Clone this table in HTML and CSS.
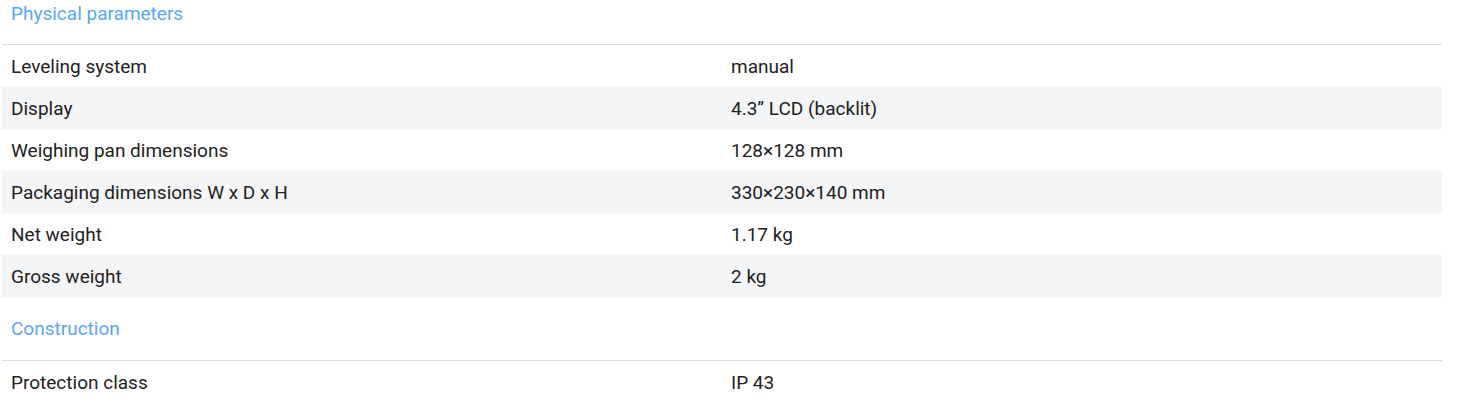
FILE: index.html
```html
<!DOCTYPE html>
<html lang="en">
<head>
<meta charset="utf-8">
<link rel="stylesheet" href="styles.css">
</head>
<body>
<div class="specs">
  <section class="group first">
    <h3 class="group-title">Physical parameters</h3>
    <div class="rows">
      <div class="row"><div class="cell">Leveling system</div><div class="cell">manual</div></div>
      <div class="row alt"><div class="cell">Display</div><div class="cell">4.3” LCD (backlit)</div></div>
      <div class="row"><div class="cell">Weighing pan dimensions</div><div class="cell">128×128 mm</div></div>
      <div class="row alt"><div class="cell">Packaging dimensions W x D x H</div><div class="cell">330×230×140 mm</div></div>
      <div class="row"><div class="cell">Net weight</div><div class="cell">1.17 kg</div></div>
      <div class="row alt"><div class="cell">Gross weight</div><div class="cell">2 kg</div></div>
    </div>
  </section>
  <section class="group">
    <h3 class="group-title">Construction</h3>
    <div class="rows">
      <div class="row"><div class="cell">Protection class</div><div class="cell">IP 43</div></div>
    </div>
  </section>
</div>
</body>
</html>
```
FILE: styles.css
```css
html, body {
  margin: 0;
  padding: 0;
  background: #ffffff;
}
body {
  font-family: Roboto, "Liberation Sans", Arial, sans-serif;
  color: #222222;
  overflow: hidden;
}
.specs {
  width: 1440px;
  margin-left: 2px;
}
.group-title {
  margin: 0;
  font-weight: 400;
  font-size: 19px;
  line-height: 24px;
  color: #5aa6f7;
  padding: 20px 9px 19px;
  border-bottom: 1px solid #dddddd;
}
.group.first .group-title {
  padding-top: 2px;
  padding-bottom: 18px;
}
.row {
  display: grid;
  grid-template-columns: 1fr 1fr;
  height: 42px;
  align-items: center;
  font-size: 19px;
  line-height: 24px;
}
.row.alt {
  background: #f4f5f6;
}
.cell {
  padding: 2px 9px 0;
}
```
